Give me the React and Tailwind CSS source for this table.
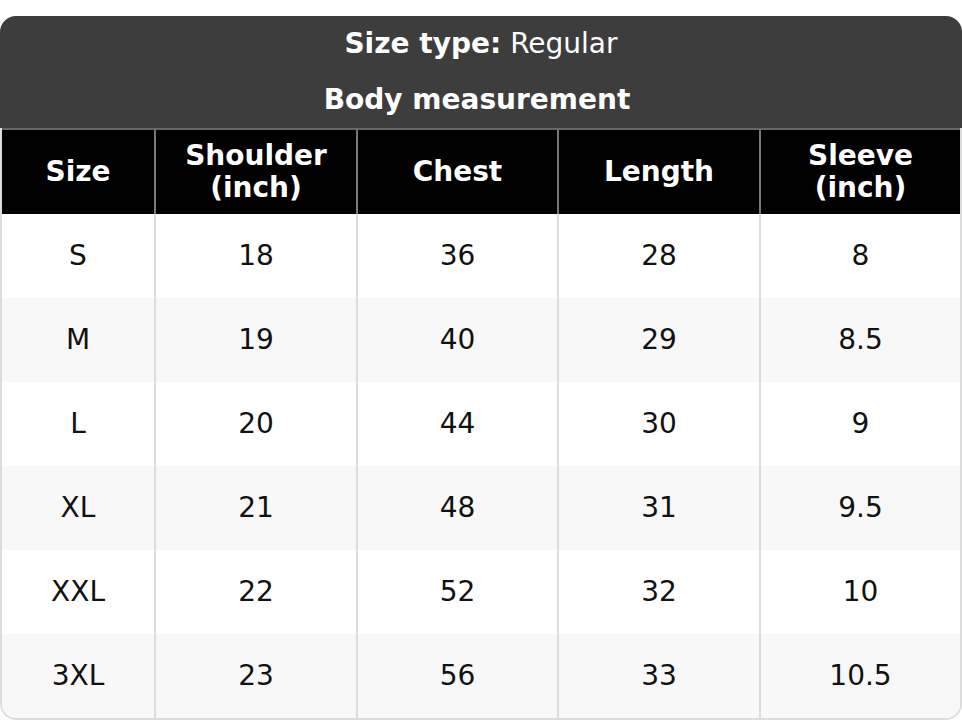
import React from 'react';

const columns = [
    ['Size'],
    ['Shoulder', '(inch)'],
    ['Chest'],
    ['Length'],
    ['Sleeve', '(inch)'],
];

const rows = [
    ['S', '18', '36', '28', '8'],
    ['M', '19', '40', '29', '8.5'],
    ['L', '20', '44', '30', '9'],
    ['XL', '21', '48', '31', '9.5'],
    ['XXL', '22', '52', '32', '10'],
    ['3XL', '23', '56', '33', '10.5'],
];

const font = { fontFamily: '"DejaVu Sans", Verdana, sans-serif' };

const App = () => {
    return (
        <div className="w-[962px] h-[720px] bg-white pt-4" style={font}>
            <div className="rounded-2xl overflow-hidden">
                <div className="bg-[#3d3d3d] text-white text-[28px]">
                    <div className="h-[56px] flex items-center justify-center">
                        <span className="font-bold">Size type:</span>
                        <span className="ml-[9px]">Regular</span>
                    </div>
                    <div className="h-[56px] flex items-center justify-center font-bold pr-[8px]">
                        Body measurement
                    </div>
                </div>

                <div className="border-x-2 border-b-2 border-[#dcdcdc] rounded-b-2xl overflow-hidden">
                    <div className="grid grid-cols-[152px_202px_201px_202px_1fr] bg-black border-t-2 border-[#666]">
                        {columns.map((lines, i) => (
                            <div
                                key={i}
                                className={`h-[84px] flex flex-col items-center justify-center text-white font-bold text-[28px] leading-[32px] ${i > 0 ? 'border-l-2 border-[#777]' : ''}`}
                            >
                                {lines.map((l) => (
                                    <span key={l}>{l}</span>
                                ))}
                            </div>
                        ))}
                    </div>

                    {rows.map((row, r) => (
                        <div
                            key={row[0]}
                            className={`grid grid-cols-[152px_202px_201px_202px_1fr] ${r % 2 === 1 ? 'bg-[#f8f8f8]' : 'bg-white'}`}
                        >
                            {row.map((cell, i) => (
                                <div
                                    key={i}
                                    className={`h-[84px] flex items-center justify-center text-[28px] text-[#111] ${i > 0 ? 'border-l-2 border-[#dcdcdc]' : ''}`}
                                >
                                    {cell}
                                </div>
                            ))}
                        </div>
                    ))}
                </div>
            </div>
        </div>
    );
};

export default App;
